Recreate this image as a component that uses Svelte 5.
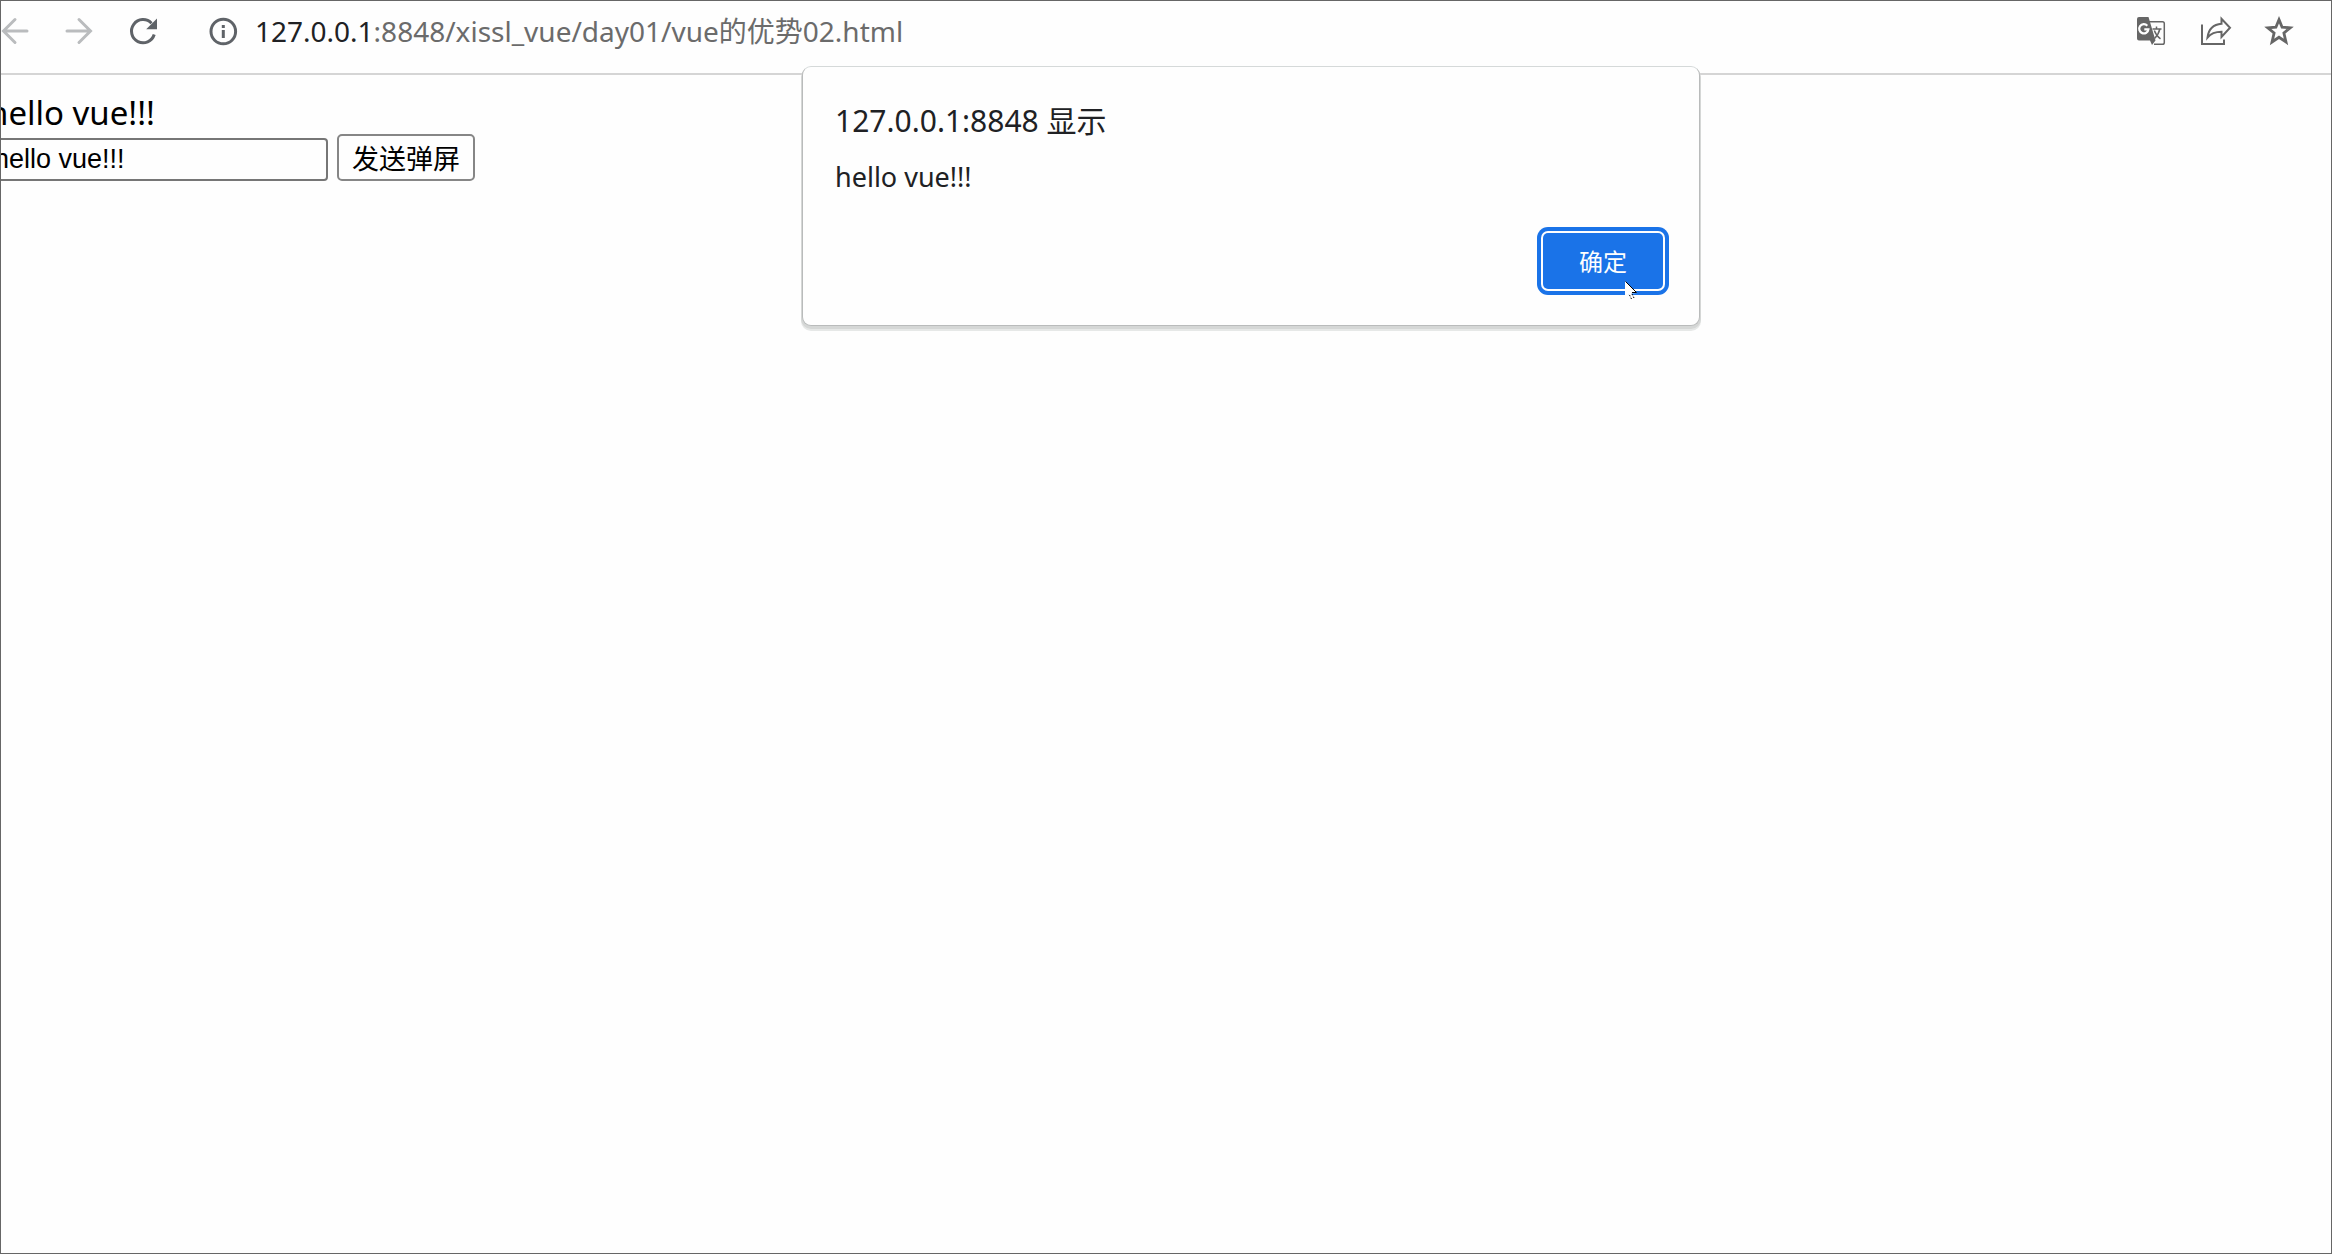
<script lang="ts">
	let message = $state('hello vue!!!');
	let alertText = $state('hello vue!!!');
	let open = $state(true);

	const send = () => {
		alertText = message;
		open = true;
	};
</script>

<div class="window">
	<header class="toolbar">
		<nav class="nav">
			<button class="icon faded" aria-label="后退">
				<svg viewBox="0 0 28 28">
					<path d="M26 14H3M14 2.5L2.5 14L14 25.5" />
				</svg>
			</button>
			<button class="icon faded" aria-label="前进">
				<svg viewBox="0 0 28 28">
					<path d="M2 14H25M14 2.5L25.5 14L14 25.5" />
				</svg>
			</button>
			<button class="icon" aria-label="重新加载">
				<svg viewBox="0 0 28 28">
					<path d="M25.2 17.5A11.6 11.6 0 1 1 22.5 6.2" />
					<path class="solid" d="M28 1.5V12.3H17.2Z" />
				</svg>
			</button>
		</nav>

		<div class="address">
			<button class="icon" aria-label="网站信息">
				<svg viewBox="0 0 28 28">
					<circle cx="14.3" cy="14.5" r="12.3" />
					<path class="solid" d="M12.8 8h3v3h-3zM12.8 13h3v8h-3z" />
				</svg>
			</button>
			<span class="url"><span class="host">127.0.0.1</span>:8848/xissl_vue/day01/vue的优势02.html</span>
		</div>

		<div class="actions">
			<button class="icon grey" aria-label="翻译此页">
				<svg viewBox="0 0 28 28">
					<path class="thin" d="M12 4.7H25.5a1.8 1.8 0 0 1 1.8 1.8V25.5a1.8 1.8 0 0 1-1.8 1.8H17" />
					<path class="solid" d="M2 0H11.5L18.5 23.5L15 28L13 23.5H2a2 2 0 0 1-2-2V2a2 2 0 0 1 2-2Z" />
					<path class="letter" d="M10.3 8.8A4.6 4.6 0 1 0 11.4 12.3H7.3" />
					<path class="thin" d="M15.5 12H24.5M19.5 9.5V12M22.8 12C22 16 19.5 19.5 17.5 21.5M17.3 13.5C18.5 17 21 20 23.5 21.8" />
				</svg>
			</button>
			<button class="icon grey" aria-label="分享此页">
				<svg viewBox="0 0 28 28">
					<path class="share" d="M1 7.5V27H23V22.5" />
					<path class="share" d="M6.5 20.5C7.5 12.5 12 7.5 20.5 6.8V1.8L29 10.8L20.5 20V14.7C14 14.7 9.8 16.5 6.5 20.5Z" />
				</svg>
			</button>
			<button class="icon grey" aria-label="为此标签页添加书签">
				<svg viewBox="0 0 28 28">
					<path
						class="star"
						d="M14 2.6L17.1 10.2L25.2 10.8L18.9 16L21 25L14 20.3L7 25L9.1 16L2.8 10.8L10.9 10.2Z"
					/>
				</svg>
			</button>
		</div>
	</header>

	<main class="page">
		<div class="message">{message}</div>
		<div class="row">
			<input type="text" aria-label="消息" bind:value={message} />
			<button class="send" onclick={send}>发送弹屏</button>
		</div>
	</main>

	{#if open}
		<dialog open aria-labelledby="alert-title">
			<h1 id="alert-title">127.0.0.1:8848 显示</h1>
			<p>{alertText}</p>
			<div class="buttons">
				<button class="ok" onclick={() => (open = false)}>确定</button>
			</div>
			<svg class="cursor" viewBox="0 0 12 20" aria-hidden="true">
				<path class="fill" d="M0 0V17L4 13.5L6 18.5L8.5 17.5L6.5 12.5L12 12Z" />
				<path class="edge" d="M0.5 0.5L11.5 11.5H7" />
				<path class="edge dots" d="M4.5 14L7 19M7 13L9.5 18" />
			</svg>
		</dialog>
	{/if}
</div>

<style>
	:global(body) {
		margin: 0;
	}

	.window {
		position: relative;
		box-sizing: border-box;
		min-height: 100vh;
		overflow: hidden;
		border: 1px solid #666;
		background: #fefefe;
		font-family: 'Noto Sans', 'Noto Sans CJK SC', sans-serif;
		color: #000;
	}

	button {
		font-family: inherit;
		cursor: default;
	}

	.toolbar {
		display: flex;
		align-items: center;
		padding: 10px 38px 22px 0;
		border-bottom: 2px solid #d5d5d5;
	}

	.nav,
	.actions {
		display: flex;
		gap: 36px;
	}

	.icon {
		display: block;
		flex: none;
		width: 28px;
		height: 28px;
		padding: 0;
		border: 0;
		background: none;
		color: #5f6368;
	}

	.icon.faded {
		color: #babcbe;
	}

	.icon.grey {
		color: #666;
	}

	.icon svg {
		display: block;
		width: 28px;
		height: 28px;
		overflow: visible;
		fill: none;
		stroke: currentColor;
		stroke-width: 3;
	}

	.faded svg {
		stroke-linecap: round;
	}

	.icon .solid {
		fill: currentColor;
		stroke: none;
	}

	.icon .thin {
		stroke-width: 1.5;
	}

	.icon .letter {
		stroke: #fefefe;
		stroke-width: 2.2;
	}

	.icon .share {
		stroke-width: 2;
	}

	.icon .star {
		stroke-width: 2.8;
	}

	.address {
		display: flex;
		flex: 1;
		align-items: center;
		gap: 18px;
		min-width: 0;
		margin-left: 52px;
	}

	.url {
		font-size: 28px;
		line-height: 40px;
		color: #6b6b6b;
		white-space: nowrap;
	}

	.host {
		color: #202124;
	}

	/* the left edge of the page runs out of the window */
	.page {
		margin-left: -13px;
		padding-top: 17px;
	}

	.message {
		font-size: 33px;
		line-height: 42px;
	}

	.row {
		display: flex;
		align-items: flex-end;
		gap: 9px;
	}

	input {
		box-sizing: border-box;
		width: 340px;
		height: 43px;
		padding: 2px 4px;
		border: 2px solid #767676;
		border-radius: 4px;
		background: #fefefe;
		font-family: 'Liberation Sans', Arial, sans-serif;
		font-size: 27px;
		color: #000;
	}

	.send {
		box-sizing: border-box;
		height: 47px;
		padding: 0 13px;
		border: 2px solid #868686;
		border-radius: 5px;
		background: #fefefe;
		font-family: 'Noto Sans CJK SC', sans-serif;
		font-size: 27px;
		line-height: 40px;
		color: #000;
	}

	dialog {
		position: absolute;
		top: 65px;
		left: calc(50% - 364px);
		box-sizing: border-box;
		width: 898px;
		margin: 0;
		padding: 30px 36px 36px 32px;
		border: 1px solid #b9bbbb;
		border-top-color: #d5d9d9;
		border-radius: 9px;
		background: #fefefe;
		box-shadow:
			0 2px 0 1px #d5d7d6,
			0 4px 0 1px #e6e8e7;
		color: #202124;
	}

	h1 {
		margin: 0;
		font-size: 30px;
		font-weight: 400;
		line-height: 48px;
	}

	p {
		margin: 12px 0 36px;
		font-size: 27px;
		line-height: 40px;
	}

	.buttons {
		display: flex;
		justify-content: flex-end;
	}

	.ok {
		padding: 0 36px;
		border: 0;
		border-radius: 5px;
		background: #1a73e8;
		box-shadow:
			0 0 0 2px #fefefe,
			0 0 0 6px #1a73e8;
		font-family: 'Noto Sans CJK SC', sans-serif;
		font-size: 24px;
		line-height: 56px;
		color: #fefefe;
	}

	.cursor {
		position: absolute;
		right: 62px;
		bottom: 24px;
		width: 12px;
		height: 20px;
	}

	.cursor .fill {
		fill: #fefefe;
	}

	.cursor .edge {
		fill: none;
		stroke: #000;
	}

	.cursor .dots {
		stroke-dasharray: 1.5 1.5;
	}
</style>
